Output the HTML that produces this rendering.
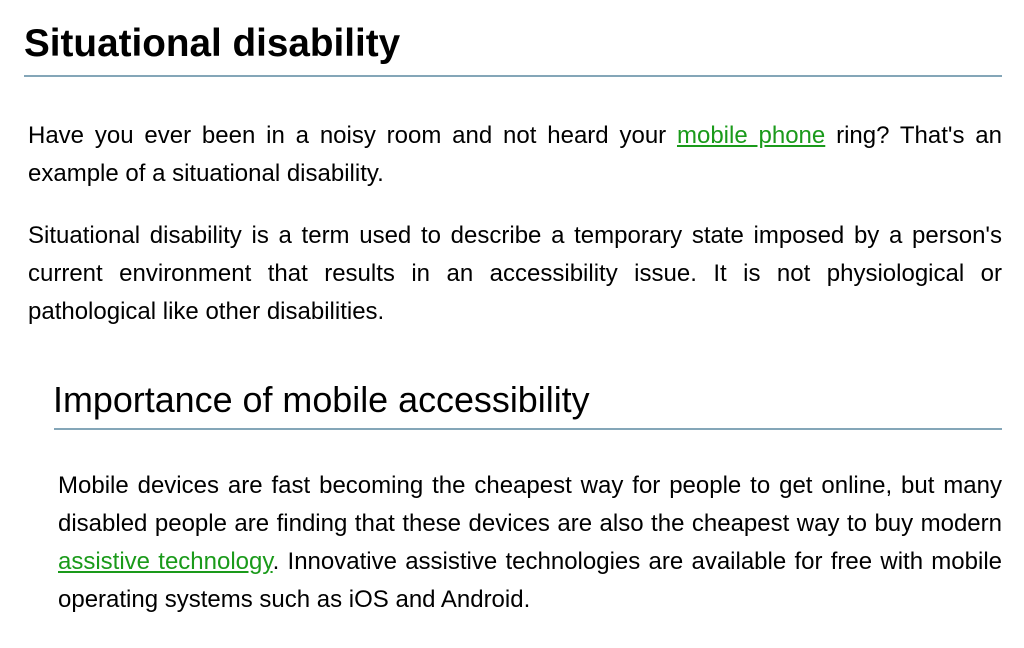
<!DOCTYPE html>
<html><head><meta charset="utf-8"><style>
body{margin:0;width:1024px;height:648px;background:#fff;overflow:hidden;font-family:"Liberation Sans",Arial,sans-serif;color:#000;position:relative}
.a{position:absolute;margin:0}
h1{font-size:38.7px;font-weight:bold;left:24px;top:22px;line-height:44px}
h2{font-size:35.9px;font-weight:normal;left:53px;top:380px;line-height:40px}
.r{position:absolute;height:2px;background:#84a6b8}
.p{font-size:24px;line-height:38px}
.p div{text-align:justify;text-align-last:justify;white-space:nowrap}
.p div.l{text-align:left;text-align-last:left}
a{color:#1a9a1a;text-decoration:underline}
</style></head><body>
<h1 class="a">Situational disability</h1>
<div class="r" style="left:24px;top:75px;width:978px"></div>
<div class="a p" style="left:28px;top:117px;width:974px">
<div>Have you ever been in a noisy room and not heard your <a>mobile phone</a> ring? That's an</div>
<div class="l">example of a situational disability.</div>
</div>
<div class="a p" style="left:28px;top:217px;width:974px">
<div>Situational disability is a term used to describe a temporary state imposed by a person's</div>
<div>current environment that results in an accessibility issue. It is not physiological or</div>
<div class="l">pathological like other disabilities.</div>
</div>
<h2 class="a">Importance of mobile accessibility</h2>
<div class="r" style="left:54px;top:428px;width:948px"></div>
<div class="a p" style="left:58px;top:467px;width:944px">
<div>Mobile devices are fast becoming the cheapest way for people to get online, but many</div>
<div>disabled people are finding that these devices are also the cheapest way to buy modern</div>
<div><a>assistive technology</a>. Innovative assistive technologies are available for free with mobile</div>
<div class="l">operating systems such as iOS and Android.</div>
</div>
</body></html>
